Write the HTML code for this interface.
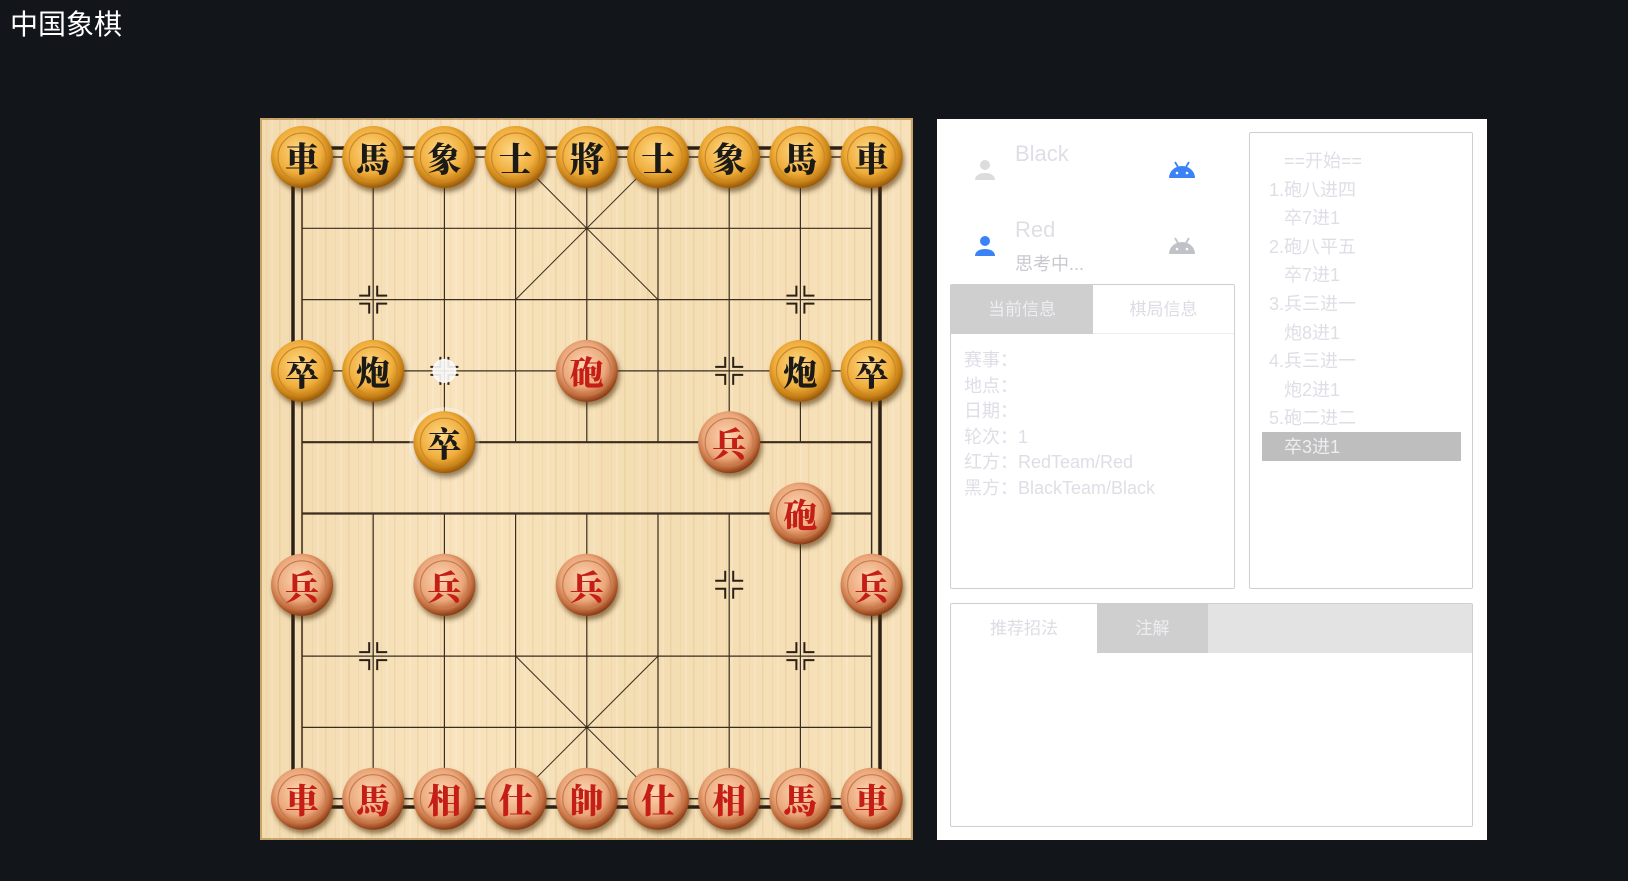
<!DOCTYPE html>
<html><head><meta charset="utf-8">
<style>
body{margin:0;width:1628px;height:881px;background:#12151a;overflow:hidden;position:relative;font-family:"Liberation Sans","Noto Sans CJK SC",sans-serif}
.abs{position:absolute}
.t{color:#dedee6}
</style></head><body>
<div class="abs" style="left:10px;top:3px;font-size:28px;color:#fff;font-family:'Liberation Sans','Noto Sans CJK SC',sans-serif">中国象棋</div>

<svg class="abs" style="left:0;top:0" width="1628" height="881" viewBox="0 0 1628 881">
<defs>
<linearGradient id="wood" x1="0" y1="0" x2="1" y2="0">
<stop offset="0" stop-color="#f3dbb0"/><stop offset=".3" stop-color="#f8e3bd"/><stop offset=".6" stop-color="#f4ddb2"/><stop offset="1" stop-color="#f7e1ba"/></linearGradient>
<pattern id="grain" width="23" height="40" patternUnits="userSpaceOnUse"><rect width="23" height="40" fill="none"/><rect x="3" width="1.5" height="40" fill="#d9b47a" opacity=".25"/><rect x="13" width="1" height="40" fill="#d9b47a" opacity=".18"/><rect x="18" width="2" height="40" fill="#fff" opacity=".15"/></pattern>
<radialGradient id="pb" cx=".45" cy=".4" r=".6"><stop offset="0" stop-color="#ffd98a"/><stop offset=".6" stop-color="#f0ae3c"/><stop offset=".85" stop-color="#c98214"/><stop offset="1" stop-color="#9a5a0c"/></radialGradient>
<radialGradient id="pr" cx=".45" cy=".4" r=".6"><stop offset="0" stop-color="#fcd6b2"/><stop offset=".6" stop-color="#eba77a"/><stop offset=".85" stop-color="#c06a3a"/><stop offset="1" stop-color="#8a3c18"/></radialGradient>
<filter id="sh" x="-30%" y="-30%" width="160%" height="160%"><feDropShadow dx="2" dy="4" stdDeviation="2.5" flood-color="#4a2a00" flood-opacity=".55"/></filter>
<g id="B"><circle r="31" fill="url(#pb)" filter="url(#sh)"/><circle r="24" fill="none" stroke="#c9882a" stroke-width="1.2"/></g>
<g id="R"><circle r="31" fill="url(#pr)" filter="url(#sh)"/><circle r="24" fill="none" stroke="#c57a52" stroke-width="1.2"/></g>
</defs>
<rect x="261" y="119" width="651" height="720" fill="url(#wood)" stroke="#c7a36a" stroke-width="2"/>
<rect x="261" y="119" width="651" height="720" fill="url(#grain)"/>
<rect x="293" y="148" width="587" height="659" fill="none" stroke="#2b2016" stroke-width="3.5"/>
<g stroke="#3a2c1e" stroke-width="1.2" fill="none">
<rect x="302" y="157" width="569.6" height="641.7" stroke-width="1.5"/>
<path d="M302 228.3H871.6M302 299.6H871.6M302 370.9H871.6M302 656.1H871.6M302 727.4H871.6"/>
<path d="M302 442.2H871.6M302 513.5H871.6" stroke-width="2.2"/>
<path d="M373.2 157V442.2M444.4 157V442.2M515.6 157V442.2M586.8 157V442.2M658 157V442.2M729.2 157V442.2M800.4 157V442.2"/>
<path d="M373.2 513.5V798.7M444.4 513.5V798.7M515.6 513.5V798.7M586.8 513.5V798.7M658 513.5V798.7M729.2 513.5V798.7M800.4 513.5V798.7"/>
<path d="M515.6 157L658 299.6M658 157L515.6 299.6M515.6 656.1L658 798.7M658 656.1L515.6 798.7" stroke-width="1"/>
</g>
<g stroke="#2b2016" stroke-width="2" fill="none">
<path d="M-4 -14V-4H-14M4 -14V-4H14M-4 14V4H-14M4 14V4H14" transform="translate(373.2 299.6)"/>
<path d="M-4 -14V-4H-14M4 -14V-4H14M-4 14V4H-14M4 14V4H14" transform="translate(800.4 299.6)"/>
<path d="M-4 -14V-4H-14M4 -14V-4H14M-4 14V4H-14M4 14V4H14" transform="translate(729.2 370.9)"/>
<path d="M-4 -14V-4H-14M4 -14V-4H14M-4 14V4H-14M4 14V4H14" transform="translate(444.4 370.9)"/>
<path d="M-4 -14V-4H-14M4 -14V-4H14M-4 14V4H-14M4 14V4H14" transform="translate(729.2 584.8)"/>
<path d="M-4 -14V-4H-14M4 -14V-4H14M-4 14V4H-14M4 14V4H14" transform="translate(373.2 656.1)"/>
<path d="M-4 -14V-4H-14M4 -14V-4H14M-4 14V4H-14M4 14V4H14" transform="translate(800.4 656.1)"/>
</g>
<circle cx="444.4" cy="370.9" r="11" fill="#fafafa" stroke="#fff" stroke-width="2" opacity=".9"/>
<circle cx="444.4" cy="442.2" r="34" fill="#fff" opacity=".35" stroke="#fff" stroke-width="2"/>

<g font-family="'Noto Serif CJK SC','Noto Sans CJK SC',serif" font-weight="900" font-size="34" text-anchor="middle" dominant-baseline="central">
<g fill="#1c1a16">
<use href="#B" x="302" y="157"/><text x="302" y="157">車</text>
<use href="#B" x="373.2" y="157"/><text x="373.2" y="157">馬</text>
<use href="#B" x="444.4" y="157"/><text x="444.4" y="157">象</text>
<use href="#B" x="515.6" y="157"/><text x="515.6" y="157">士</text>
<use href="#B" x="586.8" y="157"/><text x="586.8" y="157">將</text>
<use href="#B" x="658" y="157"/><text x="658" y="157">士</text>
<use href="#B" x="729.2" y="157"/><text x="729.2" y="157">象</text>
<use href="#B" x="800.4" y="157"/><text x="800.4" y="157">馬</text>
<use href="#B" x="871.6" y="157"/><text x="871.6" y="157">車</text>
<use href="#B" x="302" y="370.9"/><text x="302" y="370.9">卒</text>
<use href="#B" x="373.2" y="370.9"/><text x="373.2" y="370.9">炮</text>
<use href="#B" x="800.4" y="370.9"/><text x="800.4" y="370.9">炮</text>
<use href="#B" x="871.6" y="370.9"/><text x="871.6" y="370.9">卒</text>
<use href="#B" x="444.4" y="442.2"/><text x="444.4" y="442.2">卒</text>
</g>
<g fill="#c41e16">
<use href="#R" x="586.8" y="370.9"/><text x="586.8" y="370.9">砲</text>
<use href="#R" x="729.2" y="442.2"/><text x="729.2" y="442.2">兵</text>
<use href="#R" x="800.4" y="513.5"/><text x="800.4" y="513.5">砲</text>
<use href="#R" x="302" y="584.8"/><text x="302" y="584.8">兵</text>
<use href="#R" x="444.4" y="584.8"/><text x="444.4" y="584.8">兵</text>
<use href="#R" x="586.8" y="584.8"/><text x="586.8" y="584.8">兵</text>
<use href="#R" x="871.6" y="584.8"/><text x="871.6" y="584.8">兵</text>
<use href="#R" x="302" y="798.7"/><text x="302" y="798.7">車</text>
<use href="#R" x="373.2" y="798.7"/><text x="373.2" y="798.7">馬</text>
<use href="#R" x="444.4" y="798.7"/><text x="444.4" y="798.7">相</text>
<use href="#R" x="515.6" y="798.7"/><text x="515.6" y="798.7">仕</text>
<use href="#R" x="586.8" y="798.7"/><text x="586.8" y="798.7">帥</text>
<use href="#R" x="658" y="798.7"/><text x="658" y="798.7">仕</text>
<use href="#R" x="729.2" y="798.7"/><text x="729.2" y="798.7">相</text>
<use href="#R" x="800.4" y="798.7"/><text x="800.4" y="798.7">馬</text>
<use href="#R" x="871.6" y="798.7"/><text x="871.6" y="798.7">車</text>
</g>
</g>
</svg>

<!-- panel -->
<div class="abs" style="left:937px;top:119px;width:550px;height:721px;background:#fff"></div>

<svg class="abs" style="left:973px;top:158px" width="24" height="24" viewBox="0 0 24 24"><circle cx="12" cy="7" r="5" fill="#dcdcdc"/><path d="M2 22c0-5 5-7 10-7s10 2 10 7z" fill="#dcdcdc"/></svg>
<svg class="abs" style="left:973px;top:234px" width="24" height="24" viewBox="0 0 24 24"><circle cx="12" cy="7" r="5" fill="#3b82f6"/><path d="M2 22c0-5 5-7 10-7s10 2 10 7z" fill="#3b82f6"/></svg>
<div class="abs t" style="left:1015px;top:141px;font-size:22px">Black</div>
<div class="abs t" style="left:1015px;top:217px;font-size:22px">Red</div>
<div class="abs" style="left:1015px;top:250px;font-size:18px;color:#c8c8d0">思考中...</div>
<svg class="abs" style="left:1168px;top:160px" width="28" height="20" viewBox="0 0 28 20"><path d="M1 18a13 12 0 0 1 26 0z" fill="#3b82f6"/><path d="M7 2l3 5M21 2l-3 5" stroke="#3b82f6" stroke-width="1.8"/><circle cx="9" cy="13" r="1.3" fill="#fff"/><circle cx="19" cy="13" r="1.3" fill="#fff"/></svg>
<svg class="abs" style="left:1168px;top:236px" width="28" height="20" viewBox="0 0 28 20"><path d="M1 18a13 12 0 0 1 26 0z" fill="#c0c2c8"/><path d="M7 2l3 5M21 2l-3 5" stroke="#c0c2c8" stroke-width="1.8"/><circle cx="9" cy="13" r="1.3" fill="#fff"/><circle cx="19" cy="13" r="1.3" fill="#fff"/></svg>

<!-- info tabs -->
<div class="abs" style="left:950px;top:284px;width:285px;height:305px;border:1px solid #cfcfcf;border-radius:2px;box-sizing:border-box"></div>
<div class="abs" style="left:951px;top:285px;width:142px;height:49px;background:#cfcfcf;color:#eeeef2;font-size:17px;line-height:49px;text-align:center">当前信息</div>
<div class="abs" style="left:1093px;top:285px;width:141px;height:49px;color:#dcdce4;font-size:17px;line-height:49px;text-align:center;border-bottom:1px solid #eee;box-sizing:border-box">棋局信息</div>
<div class="abs t" style="left:964px;top:348px;font-size:18px;line-height:25.5px">赛事：<br>地点：<br>日期：<br>轮次：1<br>红方：RedTeam/Red<br>黑方：BlackTeam/Black</div>

<!-- moves -->
<div class="abs" style="left:1249px;top:132px;width:224px;height:457px;border:1px solid #cfcfcf;border-radius:2px;box-sizing:border-box"></div>
<div class="abs" style="left:1262px;top:432px;width:199px;height:29px;background:#bebebe"></div>
<div class="abs t" style="left:1269px;top:147px;font-size:18px;line-height:28.6px;white-space:pre">   ==开始==
1.砲八进四
   卒7进1
2.砲八平五
   卒7进1
3.兵三进一
   炮8进1
4.兵三进一
   炮2进1
5.砲二进二
<span style="color:#eeeef2">   卒3进1</span></div>

<!-- bottom tabs -->
<div class="abs" style="left:950px;top:603px;width:523px;height:224px;border:1px solid #cfcfcf;border-radius:2px;box-sizing:border-box"></div>
<div class="abs" style="left:1097px;top:604px;width:375px;height:49px;background:#e3e3e3"></div>
<div class="abs" style="left:951px;top:604px;width:146px;height:49px;color:#dcdce4;font-size:17px;line-height:49px;text-align:center">推荐招法</div>
<div class="abs" style="left:1097px;top:604px;width:111px;height:49px;background:#cfcfcf;color:#eeeef2;font-size:17px;line-height:49px;text-align:center">注解</div>
</body></html>
